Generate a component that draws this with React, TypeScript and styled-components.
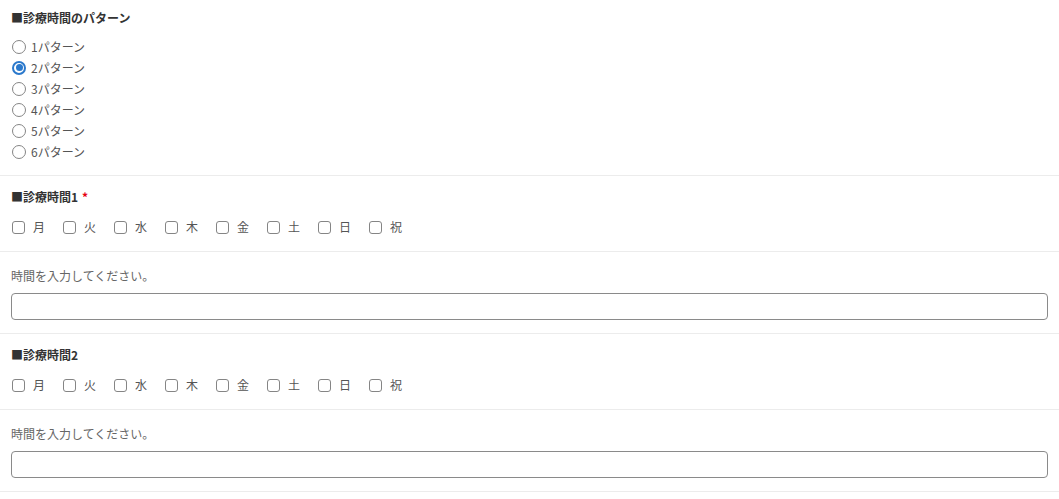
import React, { useState } from "react";
import styled, { createGlobalStyle } from "styled-components";

const GlobalStyle = createGlobalStyle`
  * {
    box-sizing: border-box;
    margin: 0;
    padding: 0;
  }
  body {
    background: #fff;
    font-family: "Noto Sans CJK JP", "Noto Sans", sans-serif;
    font-size: 12px;
    color: #555;
  }
`;

const Form = styled.div`
  width: 100%;
`;

const Section = styled.section<{ $top?: number; $bottom?: number }>`
  padding: ${(p) => p.$top ?? 12}px 11px ${(p) => p.$bottom ?? 13}px 11px;
  border-bottom: 1px solid #ececec;
`;

const Title = styled.div`
  font-size: 12px;
  line-height: 18px;
  font-weight: 700;
  color: #333;
`;

const Required = styled.span`
  color: #e60012;
  margin-left: 4px;
`;

const RadioList = styled.div`
  display: flex;
  flex-direction: column;
  margin-top: 9px;
`;

const RadioRow = styled.label`
  display: flex;
  align-items: center;
  gap: 5px;
  height: 21px;
  padding-left: 1px;
  cursor: pointer;
`;

const Radio = styled.span<{ $checked: boolean }>`
  width: 14px;
  height: 14px;
  border-radius: 50%;
  border: ${(p) => (p.$checked ? "2px solid #2b79cc" : "1px solid #858585")};
  background: #fff;
  display: flex;
  align-items: center;
  justify-content: center;
  &::after {
    content: "";
    width: 7px;
    height: 7px;
    border-radius: 50%;
    background: ${(p) => (p.$checked ? "#2b79cc" : "transparent")};
  }
`;

const DayRow = styled.div`
  display: flex;
  align-items: center;
  gap: 18px;
  margin-top: 12px;
  height: 18px;
  padding-left: 1px;
`;

const DayItem = styled.label`
  display: flex;
  align-items: center;
  gap: 8px;
  cursor: pointer;
`;

const Box = styled.span<{ $checked: boolean }>`
  width: 13px;
  height: 13px;
  border: 1px solid #858585;
  border-radius: 3px;
  background: ${(p) => (p.$checked ? "#2b79cc" : "#fff")};
`;

const DayText = styled.span`
  width: 12px;
  line-height: 18px;
  color: #555;
`;

const Hint = styled.div`
  line-height: 18px;
  color: #666;
`;

const TimeInput = styled.textarea`
  display: block;
  width: 100%;
  height: 27px;
  margin-top: 8px;
  border: 1px solid #8a8a8a;
  border-radius: 4px;
  resize: none;
  font-family: inherit;
  font-size: 12px;
  padding: 4px 6px;
  outline: none;
`;

const PATTERNS = ["1パターン", "2パターン", "3パターン", "4パターン", "5パターン", "6パターン"];
const DAYS = ["月", "火", "水", "木", "金", "土", "日", "祝"];

const Days: React.FC = () => {
  const [checked, setChecked] = useState<string[]>([]);
  const toggle = (d: string) =>
    setChecked((c) => (c.includes(d) ? c.filter((x) => x !== d) : [...c, d]));
  return (
    <DayRow>
      {DAYS.map((d) => (
        <DayItem key={d} onClick={() => toggle(d)}>
          <Box $checked={checked.includes(d)} />
          <DayText>{d}</DayText>
        </DayItem>
      ))}
    </DayRow>
  );
};

const App: React.FC = () => {
  const [pattern, setPattern] = useState(1);

  return (
    <>
      <GlobalStyle />
      <Form>
        <Section $top={9} $bottom={13}>
          <Title>■診療時間のパターン</Title>
          <RadioList>
            {PATTERNS.map((p, i) => (
              <RadioRow key={p} onClick={() => setPattern(i)}>
                <Radio $checked={pattern === i} />
                <span>{p}</span>
              </RadioRow>
            ))}
          </RadioList>
        </Section>

        <Section $top={12} $bottom={15}>
          <Title>
            ■診療時間1<Required>*</Required>
          </Title>
          <Days />
        </Section>

        <Section $top={15} $bottom={13}>
          <Hint>時間を入力してください。</Hint>
          <TimeInput />
        </Section>

        <Section $top={12} $bottom={15}>
          <Title>■診療時間2</Title>
          <Days />
        </Section>

        <Section $top={15} $bottom={13}>
          <Hint>時間を入力してください。</Hint>
          <TimeInput />
        </Section>
      </Form>
    </>
  );
};

export default App;
